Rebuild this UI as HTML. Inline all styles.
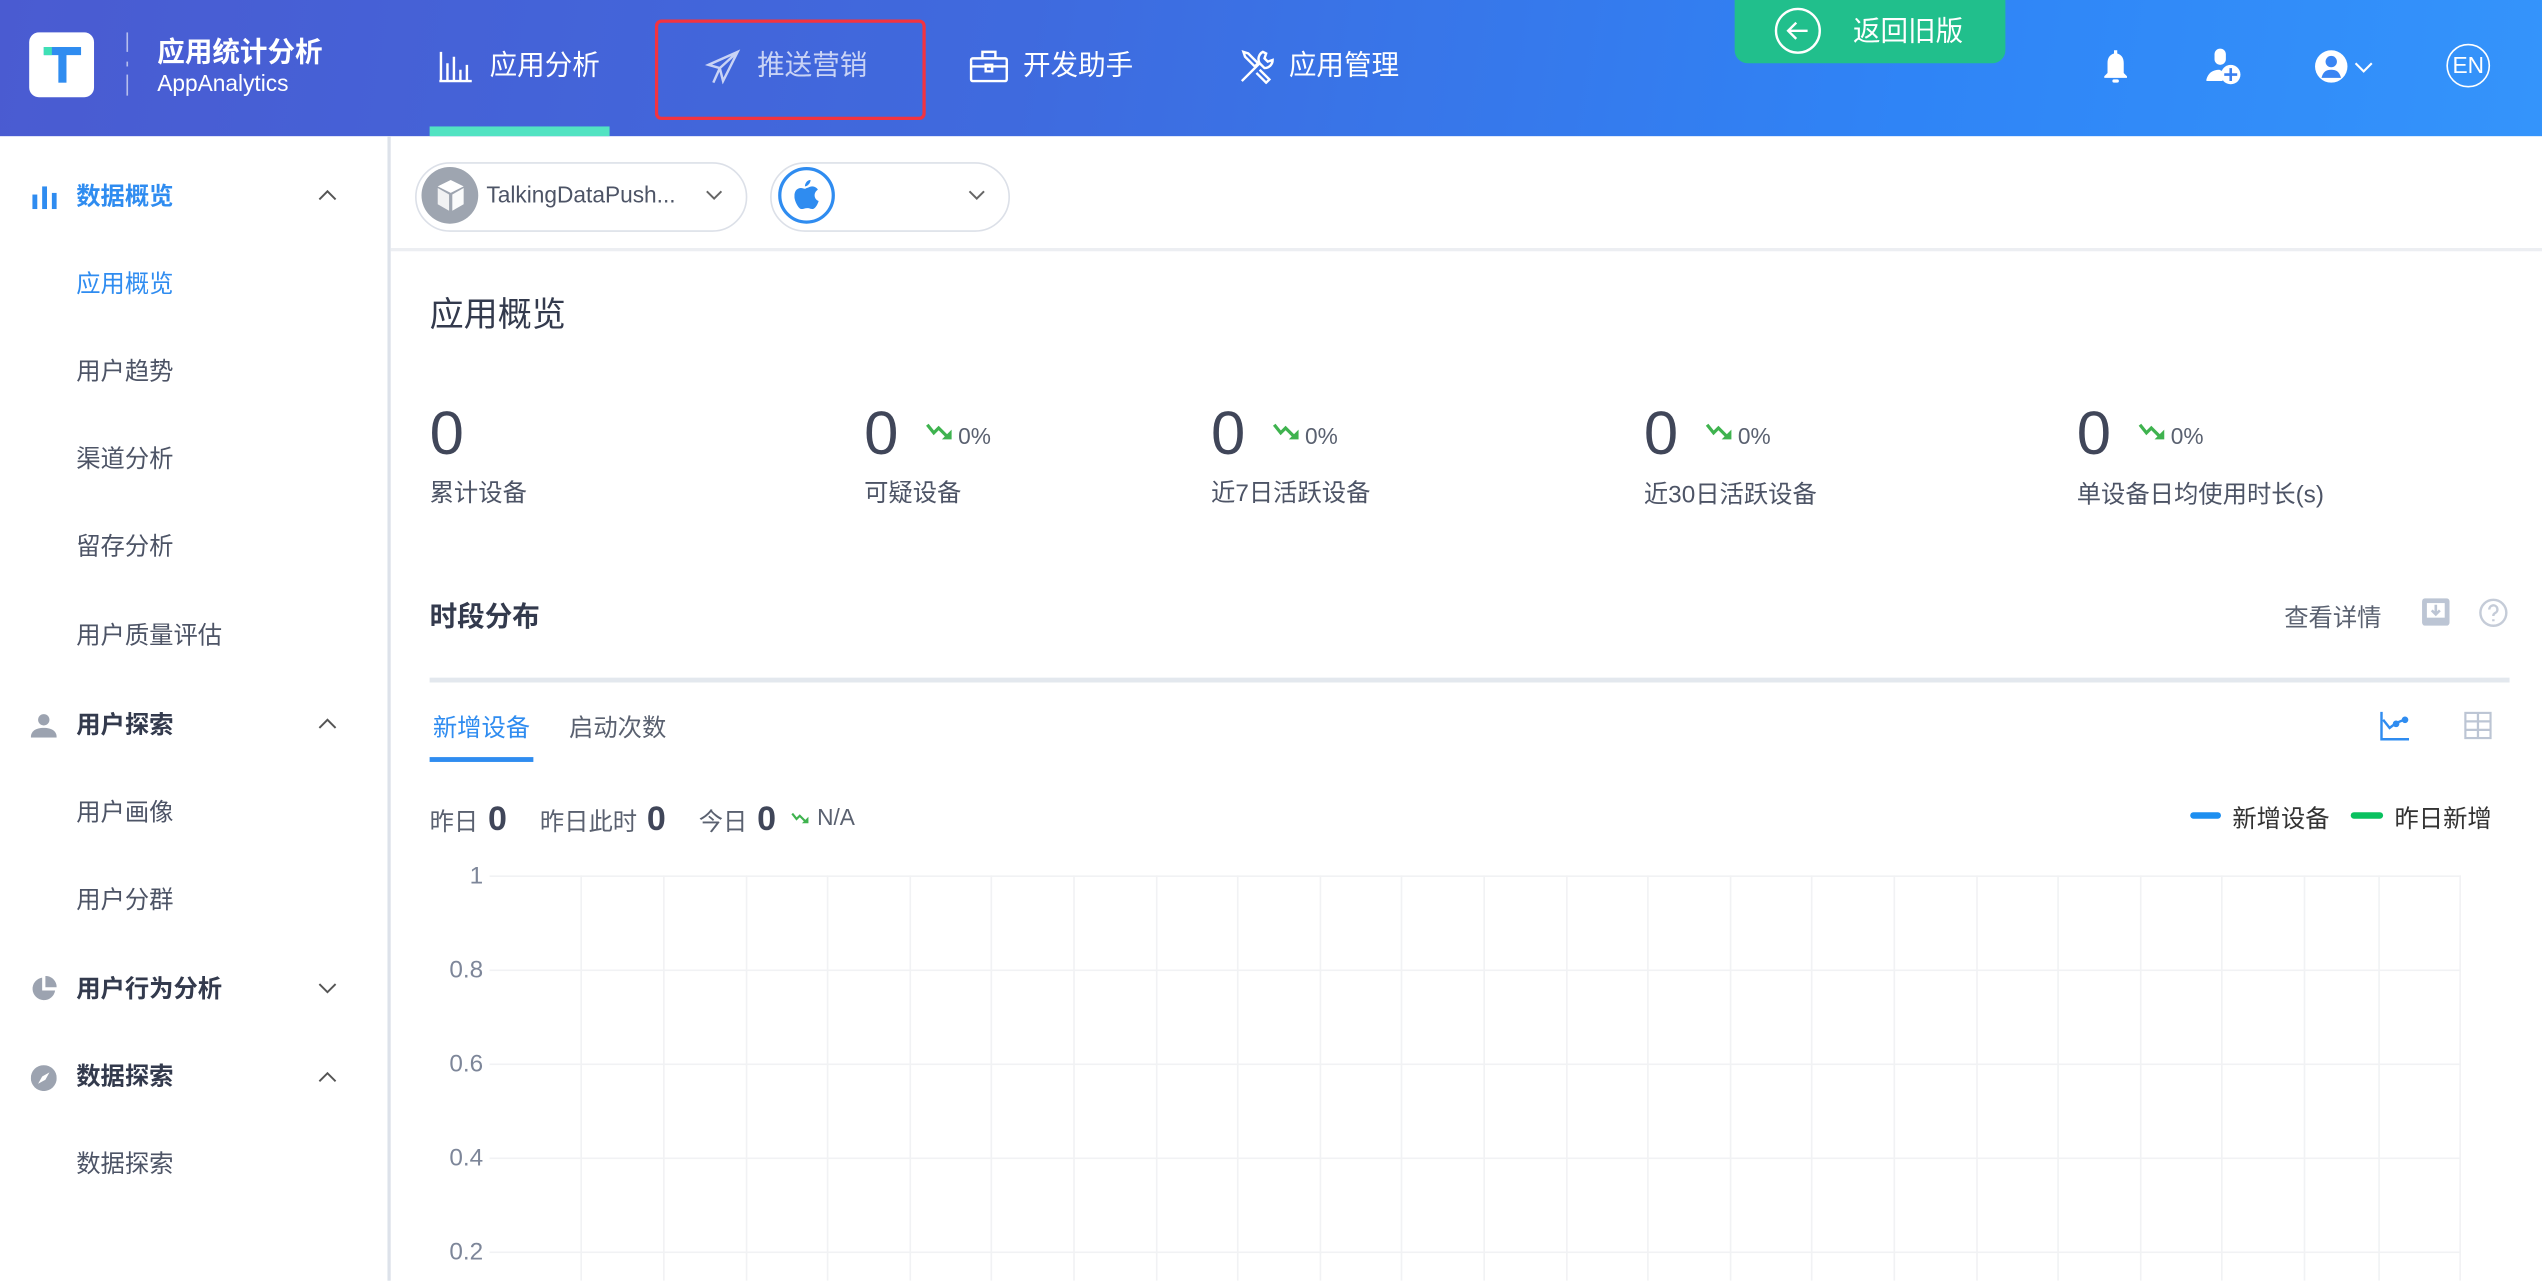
<!DOCTYPE html>
<html><head><meta charset="utf-8">
<style>
*{margin:0;padding:0;box-sizing:border-box}
html,body{width:2542px;height:1280px;overflow:hidden;background:#fff}
#w{position:absolute;left:0;top:0;width:1568px;height:790px;transform:scale(1.62117);transform-origin:0 0;font-family:"Liberation Sans","Noto Sans CJK SC",sans-serif;color:#333a4d}
.a{position:absolute;white-space:nowrap}
.hdr{position:absolute;left:0;top:0;width:1568px;height:84px;background:linear-gradient(100deg,#4a5bd1 0%,#3f6ade 40%,#2f84f6 75%,#3494fb 100%)}
.nav{color:#fff;font-size:17px;line-height:20px}
.side{font-size:15px;line-height:18px;color:#4d5466}
.sh{font-weight:bold;color:#333a4d}
.lbl{font-size:15px;color:#4d5466;line-height:18px}
.num{font-size:38px;color:#404659;line-height:40px}
.pct{font-size:14px;color:#5a6170}
</style></head><body><div id="w">
<div class="hdr"></div>
<div class="a" style="left:18px;top:20px;width:40px;height:40px;background:#fff;border-radius:6px"></div>
<div class="a" style="left:27px;top:29px;width:23px;height:5px;background:#2f8cf0"></div>
<div class="a" style="left:27px;top:29px;width:5px;height:5px;background:#3fe0b5"></div>
<div class="a" style="left:36px;top:29px;width:5px;height:22px;background:#2f8cf0"></div>
<div class="a" style="left:78px;top:20px;width:1px;height:12px;background:rgba(255,255,255,.6)"></div>
<div class="a" style="left:78px;top:38px;width:1px;height:3px;background:rgba(255,255,255,.6)"></div>
<div class="a" style="left:78px;top:46px;width:1px;height:13px;background:rgba(255,255,255,.6)"></div>
<div class="a" style="left:97px;top:18px;color:#fff;font-size:17px;font-weight:bold">应用统计分析</div>
<div class="a" style="left:97px;top:43px;color:#fff;font-size:14px">AppAnalytics</div>
<svg class="a" style="left:270px;top:31px" width="22" height="20" viewBox="0 0 22 20" fill="none" stroke="#fff" stroke-width="1.5"><path d="M1 19H21M2 19V1M6 19V8M10 19V4M14 19V12M18 19V9"/></svg>
<div class="a nav" style="left:302px;top:31px">应用分析</div>
<div class="a" style="left:265px;top:78px;width:111px;height:6px;background:#52e3c2"></div>
<div class="a" style="left:404px;top:12px;width:167px;height:62px;border:2.5px solid #f3333f;border-radius:4px"></div>
<svg class="a" style="left:435px;top:30px" width="22" height="22" viewBox="0 0 22 22" fill="none" stroke="#c9d3f5" stroke-width="1.5"><path d="M20 2L2 10l7 2 2 8zM9 12L20 2M5 21l4-9"/></svg>
<div class="a nav" style="left:467px;top:31px;color:#c9d3f5">推送营销</div>
<svg class="a" style="left:598px;top:31px" width="24" height="20" viewBox="0 0 24 20" fill="none" stroke="#fff" stroke-width="1.5"><rect x="1" y="5" width="22" height="14" rx="1"/><path d="M8 5V1h8v4M1 10h22M10 9h4v4h-4z"/></svg>
<div class="a nav" style="left:631px;top:31px">开发助手</div>
<svg class="a" style="left:764px;top:30px" width="22" height="22" viewBox="0 0 22 22" fill="none" stroke="#fff" stroke-width="1.5"><path d="M2 20L13 9M15 2a5 5 0 0 0-2 7l3 3a5 5 0 0 0 5-5l-3 1-2-2 1-3zM3 2l3 1 6 6-2 2-6-6zM13 13l6 6-2 2-6-6"/></svg>
<div class="a nav" style="left:795px;top:31px">应用管理</div>
<div class="a" style="left:1070px;top:0;width:167px;height:39px;background:#21bf8c;border-radius:0 0 8px 8px"></div>
<svg class="a" style="left:1094px;top:4px" width="30" height="30" viewBox="0 0 30 30" fill="none" stroke="#fff" stroke-width="1.5"><circle cx="15" cy="15" r="13.5"/><path d="M21 15H9M14 10l-5 5 5 5"/></svg>
<div class="a" style="left:1143px;top:5px;color:#fff;font-size:17px">返回旧版</div>
<svg class="a" style="left:1295px;top:30px" width="20" height="22" viewBox="0 0 20 22" fill="#fff"><path d="M9 1h2v2c3 1 4 3 4 6v6l2 2v1H3v-1l2-2V9c0-3 1-5 4-6z"/><rect x="8" y="19" width="4" height="2" rx="1"/></svg>
<svg class="a" style="left:1360px;top:29px" width="24" height="24" viewBox="0 0 24 24" fill="#fff"><rect x="6" y="1" width="7" height="10" rx="3.5"/><path d="M1 20c1-4 4-6 8-6l2 1v6H1z"/><circle cx="16" cy="17" r="6"/><path d="M16 13v8M12 17h8" stroke="#3a7fef" stroke-width="1.6"/></svg>
<svg class="a" style="left:1427px;top:30px" width="22" height="22" viewBox="0 0 22 22"><circle cx="11" cy="11" r="10" fill="#fff"/><circle cx="11" cy="8" r="3.5" fill="#3a85f3"/><path d="M5 18c1-4 3-5 6-5s5 1 6 5" fill="#3a85f3"/></svg>
<svg class="a" style="left:1452px;top:38px" width="12" height="8" viewBox="0 0 12 8" fill="none" stroke="#fff" stroke-width="1.3"><path d="M1 1l5 5 5-5"/></svg>
<div class="a" style="left:1509px;top:27px;width:27px;height:27px;border:1.5px solid #fff;border-radius:50%;color:#fff;font-size:14px;line-height:24px;text-align:center">EN</div>
<div class="a" style="left:239px;top:84px;width:2px;height:706px;background:#dde2ea"></div>
<svg class="a" style="left:19px;top:114px" width="16" height="15" viewBox="0 0 16 15" fill="#2f8cf0"><rect x="1" y="6" width="3" height="9"/><rect x="7" y="1" width="3" height="14"/><rect x="13" y="5" width="3" height="10"/></svg>
<div class="a side sh" style="left:47px;top:113px;color:#2f8cf0">数据概览</div>
<svg class="a" style="left:196px;top:116px" width="12" height="8" viewBox="0 0 12 8" fill="none" stroke="#555" stroke-width="1.2"><path d="M1 7l5-5 5 5"/></svg>
<div class="a side" style="left:47px;top:167px;color:#2f8cf0">应用概览</div>
<div class="a side" style="left:47px;top:221px">用户趋势</div>
<div class="a side" style="left:47px;top:275px">渠道分析</div>
<div class="a side" style="left:47px;top:329px">留存分析</div>
<div class="a side" style="left:47px;top:384px">用户质量评估</div>
<svg class="a" style="left:19px;top:440px" width="16" height="15" viewBox="0 0 16 15" fill="#9ca3b0"><circle cx="8" cy="4" r="3.5"/><path d="M0 15c0-4 3-6 8-6s8 2 8 6z"/></svg>
<div class="a side sh" style="left:47px;top:439px">用户探索</div>
<svg class="a" style="left:196px;top:442px" width="12" height="8" viewBox="0 0 12 8" fill="none" stroke="#555" stroke-width="1.2"><path d="M1 7l5-5 5 5"/></svg>
<div class="a side" style="left:47px;top:493px">用户画像</div>
<div class="a side" style="left:47px;top:547px">用户分群</div>
<svg class="a" style="left:19px;top:602px" width="16" height="16" viewBox="0 0 16 16" fill="#9ca3b0"><path d="M7 1A7 7 0 1 0 15 9H7z"/><path d="M9 0v7h7A7 7 0 0 0 9 0z"/></svg>
<div class="a side sh" style="left:47px;top:602px">用户行为分析</div>
<svg class="a" style="left:196px;top:606px" width="12" height="8" viewBox="0 0 12 8" fill="none" stroke="#555" stroke-width="1.2"><path d="M1 1l5 5 5-5"/></svg>
<svg class="a" style="left:19px;top:657px" width="16" height="16" viewBox="0 0 16 16"><circle cx="8" cy="8" r="8" fill="#9ca3b0"/><path d="M11.5 4.5L9 9 4.5 11.5 7 7z" fill="#fff"/></svg>
<div class="a side sh" style="left:47px;top:656px">数据探索</div>
<svg class="a" style="left:196px;top:660px" width="12" height="8" viewBox="0 0 12 8" fill="none" stroke="#555" stroke-width="1.2"><path d="M1 7l5-5 5 5"/></svg>
<div class="a side" style="left:47px;top:710px">数据探索</div>
<div class="a" style="left:241px;top:153px;width:1327px;height:2px;background:#eceef2"></div>
<div class="a" style="left:256px;top:100px;width:205px;height:43px;border:1.5px solid #dce0e8;border-radius:22px"></div>
<div class="a" style="left:260px;top:103px;width:35px;height:35px;border-radius:50%;background:#9ea5b0"></div>
<svg class="a" style="left:268px;top:110px" width="20" height="21" viewBox="0 0 20 21" fill="#fff"><path d="M10 1l8 4-8 4-8-4z"/><path d="M2 6l7 4v10l-7-4z" opacity=".85"/><path d="M18 6l-7 4v10l7-4z" opacity=".95"/></svg>
<div class="a" style="left:300px;top:112px;font-size:14px;color:#4d5466">TalkingDataPush...</div>
<svg class="a" style="left:435px;top:117px" width="11" height="7" viewBox="0 0 11 7" fill="none" stroke="#666" stroke-width="1.2"><path d="M1 1l4.5 4.5L10 1"/></svg>
<div class="a" style="left:475px;top:100px;width:148px;height:43px;border:1.5px solid #dce0e8;border-radius:22px"></div>
<div class="a" style="left:480px;top:103px;width:35px;height:35px;border-radius:50%;border:2px solid #2f8cf0;background:#fff"></div>
<svg class="a" style="left:490px;top:111px" width="15" height="18" viewBox="0 0 15 18" fill="#2f8cf0"><path d="M10 0c0 2-2 4-3.5 4C6.5 2 8 0 10 0zM7.5 5c1 0 2-1 3.5-1 1.5 0 3 1 3.5 2-3 2-2.5 6 .5 7-1 3-2.5 5-4 5-1 0-1.5-.6-3-.6S5.5 18 4.5 18C2.5 18 0 13 0 10c0-3.5 2-5 4-5 1.5 0 2.5 1 3.5 0z"/></svg>
<svg class="a" style="left:597px;top:117px" width="11" height="7" viewBox="0 0 11 7" fill="none" stroke="#666" stroke-width="1.2"><path d="M1 1l4.5 4.5L10 1"/></svg>
<div class="a" style="left:265px;top:178px;font-size:21px;color:#333a4d">应用概览</div>
<div class="a num" style="left:265px;top:248px">0</div>
<div class="a lbl" style="left:265px;top:296px">累计设备</div>
<div class="a num" style="left:533px;top:248px">0</div>
<div class="a lbl" style="left:533px;top:296px">可疑设备</div>
<div class="a num" style="left:747px;top:248px">0</div>
<div class="a lbl" style="left:747px;top:296px">近7日活跃设备</div>
<div class="a num" style="left:1014px;top:248px">0</div>
<div class="a lbl" style="left:1014px;top:297px">近30日活跃设备</div>
<div class="a num" style="left:1281px;top:248px">0</div>
<div class="a lbl" style="left:1281px;top:297px">单设备日均使用时长(s)</div>
<svg width="0" height="0" style="position:absolute"><defs><symbol id="dn" viewBox="0 0 18 12"><path d="M1 2l4 5 3-3 6 6" fill="none" stroke="#3fb34f" stroke-width="2"/><path d="M10 11h6V5z" fill="#3fb34f"/></symbol></defs></svg>
<svg class="a" style="left:571px;top:260px" width="18" height="12"><use href="#dn"/></svg><div class="a pct" style="left:591px;top:261px">0%</div>
<svg class="a" style="left:785px;top:260px" width="18" height="12"><use href="#dn"/></svg><div class="a pct" style="left:805px;top:261px">0%</div>
<svg class="a" style="left:1052px;top:260px" width="18" height="12"><use href="#dn"/></svg><div class="a pct" style="left:1072px;top:261px">0%</div>
<svg class="a" style="left:1319px;top:260px" width="18" height="12"><use href="#dn"/></svg><div class="a pct" style="left:1339px;top:261px">0%</div>
<div class="a" style="left:265px;top:366px;font-size:17px;font-weight:bold;color:#333a4d">时段分布</div>
<div class="a" style="left:1409px;top:370px;font-size:15px;color:#5a6170">查看详情</div>
<svg class="a" style="left:1494px;top:369px" width="17" height="17" viewBox="0 0 17 17"><rect width="17" height="17" rx="2" fill="#bcc5d4"/><rect x="3" y="3" width="11" height="9" fill="#fff"/><path d="M8.5 4v6M6 7.5l2.5 2.5L11 7.5" stroke="#bcc5d4" stroke-width="1.6" fill="none"/></svg>
<svg class="a" style="left:1529px;top:369px" width="18" height="18" viewBox="0 0 18 18" fill="none" stroke="#c5ccd8" stroke-width="1.5"><circle cx="9" cy="9" r="8"/><path d="M6.5 7a2.5 2.5 0 1 1 3.5 2.2c-.7.4-1 .8-1 1.6V11M9 13v1.2"/></svg>
<div class="a" style="left:265px;top:418px;width:1283px;height:3px;background:#e3e8ee"></div>
<div class="a" style="left:267px;top:438px;font-size:15px;color:#2f8cf0">新增设备</div>
<div class="a" style="left:351px;top:438px;font-size:15px;color:#5a6170">启动次数</div>
<div class="a" style="left:265px;top:467px;width:64px;height:3px;background:#2f8cf0"></div>
<svg class="a" style="left:1468px;top:439px" width="18" height="18" viewBox="0 0 18 18" fill="none" stroke="#2f8cf0" stroke-width="1.5"><path d="M1 0v17h17"/><path d="M2 5l4 5 4-3 5-2"/><circle cx="10" cy="7.5" r="1.3" fill="#2f8cf0"/><circle cx="15.5" cy="5" r="1.3" fill="#2f8cf0"/></svg>
<svg class="a" style="left:1520px;top:439px" width="17" height="17" viewBox="0 0 17 17" fill="none" stroke="#bcc5d4" stroke-width="1.4"><rect x=".7" y=".7" width="15.6" height="15.6"/><path d="M.7 6h15.6M.7 11.2h15.6M8.5.7v15.6"/></svg>
<div class="a" style="left:265px;top:496px;font-size:15px;color:#5a6170">昨日</div>
<div class="a" style="left:301px;top:494px;font-size:21px;font-weight:bold;color:#404659">0</div>
<div class="a" style="left:333px;top:496px;font-size:15px;color:#5a6170">昨日此时</div>
<div class="a" style="left:399px;top:494px;font-size:21px;font-weight:bold;color:#404659">0</div>
<div class="a" style="left:431px;top:496px;font-size:15px;color:#5a6170">今日</div>
<div class="a" style="left:467px;top:494px;font-size:21px;font-weight:bold;color:#404659">0</div>
<svg class="a" style="left:488px;top:500px" width="12" height="9"><use href="#dn"/></svg>
<div class="a" style="left:504px;top:496px;font-size:14px;color:#5a6170">N/A</div>
<div class="a" style="left:1351px;top:501px;width:19px;height:4px;border-radius:2px;background:#1e8ff0"></div>
<div class="a" style="left:1377px;top:494px;font-size:15px;color:#333">新增设备</div>
<div class="a" style="left:1450px;top:501px;width:20px;height:4px;border-radius:2px;background:#0ac15f"></div>
<div class="a" style="left:1477px;top:494px;font-size:15px;color:#333">昨日新增</div>
<svg class="a" style="left:0;top:0" width="1568" height="790">
<g stroke="#f1f2f4" stroke-width="1">
<path d="M302 540.5H1518M302 598.5H1518M302 656.5H1518M302 714.5H1518M302 772.5H1518"/>
<path d="M358.5 540V790M409.5 540V790M460.5 540V790M510.5 540V790M561.5 540V790M611.5 540V790M662.5 540V790M713.5 540V790M763.5 540V790M814.5 540V790M864.5 540V790M915.5 540V790M966.5 540V790M1016.5 540V790M1067.5 540V790M1117.5 540V790M1168.5 540V790M1219.5 540V790M1269.5 540V790M1320.5 540V790M1370.5 540V790M1421.5 540V790M1467.5 540V790M1517.5 540V790"/>
</g>
<g font-family="Liberation Sans, sans-serif" font-size="15" fill="#7d8699" text-anchor="end">
<text x="298" y="545">1</text><text x="298" y="603">0.8</text><text x="298" y="661">0.6</text><text x="298" y="719">0.4</text><text x="298" y="777">0.2</text>
</g>
</svg>
</div></body></html>
